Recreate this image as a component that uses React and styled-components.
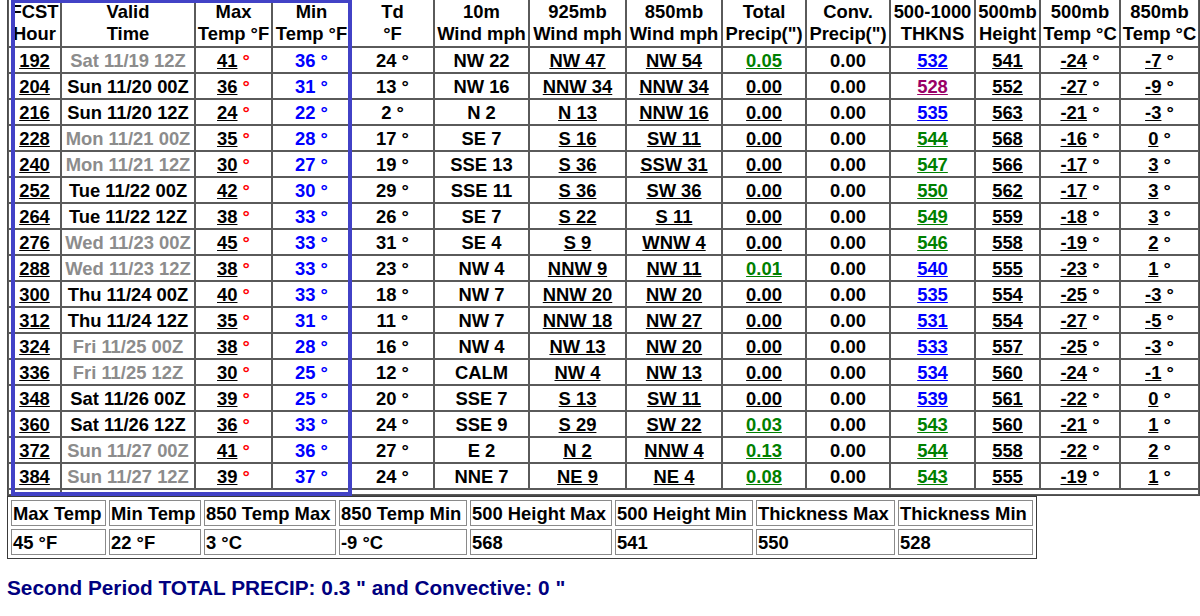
import React from 'react';
import styled, { createGlobalStyle } from 'styled-components';

const GlobalStyle = createGlobalStyle`
  html, body { margin: 0; padding: 0; background: #ffffff; }
  body {
    font-family: "Liberation Sans", Arial, sans-serif;
    font-size: 18.4px;
    color: #000000;
    overflow: hidden;
  }
`;

const Page = styled.div`
  position: relative;
  margin-top: -2px;
  padding-left: 7px;
  width: 1193px;
`;

const Grid = styled.table`
  box-sizing: border-box;
  width: 1193px;
  table-layout: fixed;
  border-collapse: separate;
  border-spacing: 0;
  border: 1px solid #4a4a4a;
`;

const Head = styled.th`
  box-sizing: border-box;
  height: 48px;
  padding: 0 1px;
  border: 1px solid #5a5a5a;
  font-weight: bold;
  line-height: 22px;
  text-align: center;
  vertical-align: middle;
  white-space: nowrap;
  overflow: hidden;
`;

const Cell = styled.td`
  box-sizing: border-box;
  height: 26px;
  padding: 0 1px;
  border: 1px solid #5a5a5a;
  font-weight: bold;
  line-height: 21px;
  text-align: center;
  vertical-align: middle;
  white-space: nowrap;
  overflow: hidden;
`;

const Spacer = styled.td`
  box-sizing: border-box;
  height: 6px;
  padding: 0;
  border: 1px solid #5a5a5a;
  font-size: 0;
  line-height: 0;
`;

const Link = styled.span`
  text-decoration: underline;
  color: ${(p) => p.$color || '#000000'};
`;

const TimeText = styled.span`
  color: ${(p) => (p.$dim ? '#8c8c8c' : '#000000')};
`;

const Deg = styled.span`
  color: ${(p) => p.$color || '#000000'};
`;

const MinTemp = styled.span`
  color: #0000ff;
`;

const Highlight = styled.div`
  position: absolute;
  left: 11px;
  top: 1px;
  width: 341px;
  height: 497px;
  box-sizing: border-box;
  border: 4px solid #4242c6;
  pointer-events: none;
`;

const Summary = styled.table`
  box-sizing: border-box;
  width: 1030px;
  table-layout: fixed;
  border-collapse: separate;
  border-spacing: 3px;
  border: 1px solid #3a3a3a;
`;

const SumCell = styled.td`
  box-sizing: border-box;
  height: 26px;
  padding: 0 1px;
  border: 1px solid #8a8a8a;
  font-weight: bold;
  line-height: 21px;
  text-align: left;
  vertical-align: middle;
  white-space: nowrap;
  overflow: hidden;
`;

const Footer = styled.div`
  margin-top: 17px;
  color: #000080;
  font-weight: bold;
  font-size: 20.8px;
  line-height: 24px;
`;

const colWidths = [53, 134, 77, 79, 83, 95, 97, 96, 84, 84, 85, 65, 80, 79];

const headers = [
  ['FCST', 'Hour'],
  ['Valid', 'Time'],
  ['Max', 'Temp °F'],
  ['Min', 'Temp °F'],
  ['Td', '°F'],
  ['10m', 'Wind mph'],
  ['925mb', 'Wind mph'],
  ['850mb', 'Wind mph'],
  ['Total', 'Precip(")'],
  ['Conv.', 'Precip(")'],
  ['500-1000', 'THKNS'],
  ['500mb', 'Height'],
  ['500mb', 'Temp °C'],
  ['850mb', 'Temp °C'],
];

const rows = [
  ['192', 'Sat 11/19 12Z', 1, 41, 36, 24, 'NW 22', 'NW 47', 'NW 54', '0.05', '532', 541, -24, -7],
  ['204', 'Sun 11/20 00Z', 0, 36, 31, 13, 'NW 16', 'NNW 34', 'NNW 34', '0.00', '528', 552, -27, -9],
  ['216', 'Sun 11/20 12Z', 0, 24, 22, 2, 'N 2', 'N 13', 'NNW 16', '0.00', '535', 563, -21, -3],
  ['228', 'Mon 11/21 00Z', 1, 35, 28, 17, 'SE 7', 'S 16', 'SW 11', '0.00', '544', 568, -16, 0],
  ['240', 'Mon 11/21 12Z', 1, 30, 27, 19, 'SSE 13', 'S 36', 'SSW 31', '0.00', '547', 566, -17, 3],
  ['252', 'Tue 11/22 00Z', 0, 42, 30, 29, 'SSE 11', 'S 36', 'SW 36', '0.00', '550', 562, -17, 3],
  ['264', 'Tue 11/22 12Z', 0, 38, 33, 26, 'SE 7', 'S 22', 'S 11', '0.00', '549', 559, -18, 3],
  ['276', 'Wed 11/23 00Z', 1, 45, 33, 31, 'SE 4', 'S 9', 'WNW 4', '0.00', '546', 558, -19, 2],
  ['288', 'Wed 11/23 12Z', 1, 38, 33, 23, 'NW 4', 'NNW 9', 'NW 11', '0.01', '540', 555, -23, 1],
  ['300', 'Thu 11/24 00Z', 0, 40, 33, 18, 'NW 7', 'NNW 20', 'NW 20', '0.00', '535', 554, -25, -3],
  ['312', 'Thu 11/24 12Z', 0, 35, 31, 11, 'NW 7', 'NNW 18', 'NW 27', '0.00', '531', 554, -27, -5],
  ['324', 'Fri 11/25 00Z', 1, 38, 28, 16, 'NW 4', 'NW 13', 'NW 20', '0.00', '533', 557, -25, -3],
  ['336', 'Fri 11/25 12Z', 1, 30, 25, 12, 'CALM', 'NW 4', 'NW 13', '0.00', '534', 560, -24, -1],
  ['348', 'Sat 11/26 00Z', 0, 39, 25, 20, 'SSE 7', 'S 13', 'SW 11', '0.00', '539', 561, -22, 0],
  ['360', 'Sat 11/26 12Z', 0, 36, 33, 24, 'SSE 9', 'S 29', 'SW 22', '0.03', '543', 560, -21, 1],
  ['372', 'Sun 11/27 00Z', 1, 41, 36, 27, 'E 2', 'N 2', 'NNW 4', '0.13', '544', 558, -22, 2],
  ['384', 'Sun 11/27 12Z', 1, 39, 37, 24, 'NNE 7', 'NE 9', 'NE 4', '0.08', '543', 555, -19, 1],
];

const thkColor = (v) => {
  const n = Number(v);
  if (n === 528) return '#990066';
  if (n > 540) return '#008000';
  return '#0000ff';
};

const summary = [
  ['Max Temp', '45 °F', 95],
  ['Min Temp', '22 °F', 92],
  ['850 Temp Max', '3 °C', 132],
  ['850 Temp Min', '-9 °C', 128],
  ['500 Height Max', '568', 142],
  ['500 Height Min', '541', 138],
  ['Thickness Max', '550', 139],
  ['Thickness Min', '528', 135],
];

function DataRow({ r }) {
  const [hour, time, dim, max, min, td, w10, w925, w850, tp, thk, h500, t500, t850] = r;
  const wet = tp !== '0.00';
  return (
    <tr>
      <Cell><Link>{hour}</Link></Cell>
      <Cell><TimeText $dim={dim}>{time}</TimeText></Cell>
      <Cell><Link>{max}</Link> <Deg $color="#ff0000">°</Deg></Cell>
      <Cell><MinTemp>{min} °</MinTemp></Cell>
      <Cell>{td} °</Cell>
      <Cell>{w10}</Cell>
      <Cell><Link>{w925}</Link></Cell>
      <Cell><Link>{w850}</Link></Cell>
      <Cell><Link $color={wet ? '#008000' : '#000000'}>{tp}</Link></Cell>
      <Cell>0.00</Cell>
      <Cell><Link $color={thkColor(thk)}>{thk}</Link></Cell>
      <Cell><Link>{h500}</Link></Cell>
      <Cell><Link>{t500}</Link> °</Cell>
      <Cell><Link>{t850}</Link> °</Cell>
    </tr>
  );
}

export default function App() {
  return (
    <>
      <GlobalStyle />
      <Page>
        <Grid>
          <thead>
            <tr>
              {headers.map(([a, b], i) => (
                <Head key={i} style={{ width: colWidths[i] }}>
                  {a}
                  <br />
                  {b}
                </Head>
              ))}
            </tr>
          </thead>
          <tbody>
            {rows.map((r) => (
              <DataRow key={r[0]} r={r} />
            ))}
            <tr>
              <Spacer />
              <Spacer colSpan={13} />
            </tr>
          </tbody>
        </Grid>
        <Summary>
          <tbody>
            <tr>
              {summary.map(([label, , w]) => (
                <SumCell key={label} style={{ width: w }}>{label}</SumCell>
              ))}
            </tr>
            <tr>
              {summary.map(([label, value]) => (
                <SumCell key={label}>{value}</SumCell>
              ))}
            </tr>
          </tbody>
        </Summary>
        <Footer>Second Period TOTAL PRECIP: 0.3 " and Convective: 0 "</Footer>
        <Highlight />
      </Page>
    </>
  );
}
